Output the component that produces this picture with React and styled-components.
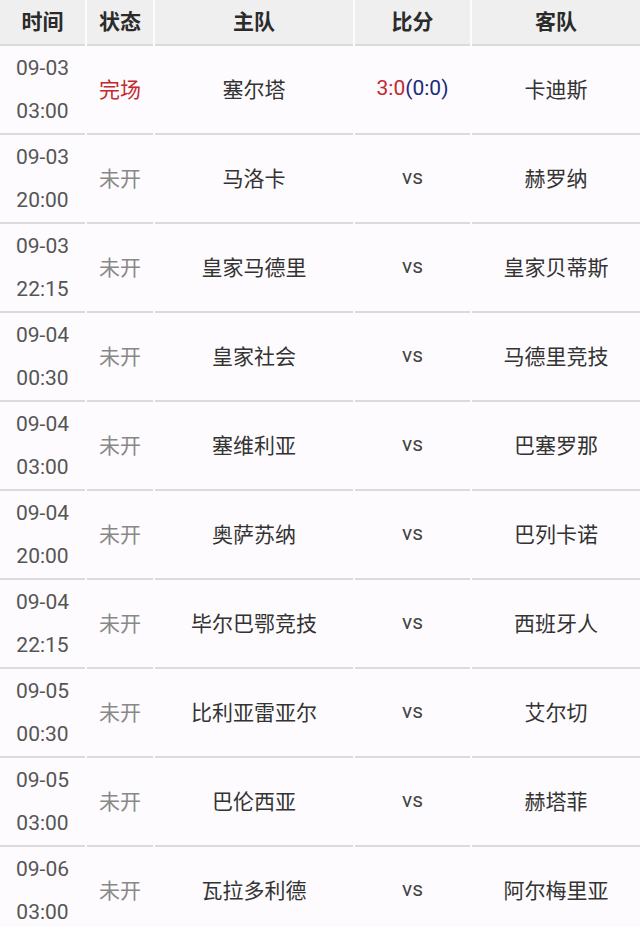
import React from 'react';
import styled, { createGlobalStyle } from 'styled-components';

const GlobalStyle = createGlobalStyle`
  body {
    margin: 0;
    background: #fdfbfd;
    font-family: Roboto, "Noto Sans CJK SC", sans-serif;
  }
`;

const MATCHES = [
  { date: '09-03', time: '03:00', done: true, home: '塞尔塔', away: '卡迪斯', score: '3:0', half: '(0:0)' },
  { date: '09-03', time: '20:00', home: '马洛卡', away: '赫罗纳' },
  { date: '09-03', time: '22:15', home: '皇家马德里', away: '皇家贝蒂斯' },
  { date: '09-04', time: '00:30', home: '皇家社会', away: '马德里竞技' },
  { date: '09-04', time: '03:00', home: '塞维利亚', away: '巴塞罗那' },
  { date: '09-04', time: '20:00', home: '奥萨苏纳', away: '巴列卡诺' },
  { date: '09-04', time: '22:15', home: '毕尔巴鄂竞技', away: '西班牙人' },
  { date: '09-05', time: '00:30', home: '比利亚雷亚尔', away: '艾尔切' },
  { date: '09-05', time: '03:00', home: '巴伦西亚', away: '赫塔菲' },
  { date: '09-06', time: '03:00', home: '瓦拉多利德', away: '阿尔梅里亚' },
];

const App = () => {
  return (
    <Table>
      <GlobalStyle />
      <Row>
        <HeadCell>时间</HeadCell>
        <HeadCell>状态</HeadCell>
        <HeadCell>主队</HeadCell>
        <HeadCell>比分</HeadCell>
        <HeadCell>客队</HeadCell>
      </Row>
      {MATCHES.map((m, i) => (
        <Row key={i}>
          <TimeCell>
            {m.date}
            <br />
            {m.time}
          </TimeCell>
          <StatusCell done={m.done}>{m.done ? '完场' : '未开'}</StatusCell>
          <TeamCell>{m.home}</TeamCell>
          <ScoreCell>
            {m.done ? (
              <>
                <Score>{m.score}</Score>
                <Half>{m.half}</Half>
              </>
            ) : (
              'vs'
            )}
          </ScoreCell>
          <TeamCell>{m.away}</TeamCell>
        </Row>
      ))}
    </Table>
  );
};

const Table = styled.div`
  width: 640px;
  overflow: hidden;
`;

const Row = styled.div`
  display: grid;
  grid-template-columns: 85px 66px 198px 115px 1fr;
  column-gap: 2px;
`;

const Cell = styled.div`
  display: flex;
  align-items: center;
  justify-content: center;
  text-align: center;
  box-sizing: border-box;
  height: 89px;
  padding-bottom: 3px;
  border-bottom: 2px solid #dcdadc;
  font-size: 21px;
  color: #333;
`;

const HeadCell = styled(Cell)`
  height: 46px;
  padding-bottom: 4px;
  background: #efefef;
  font-size: 21px;
  font-weight: 700;
  color: #2b2b2b;
`;

const TimeCell = styled(Cell)`
  padding-bottom: 0;
  line-height: 43px;
  color: #555;
`;

const StatusCell = styled(Cell)`
  color: ${p => (p.done ? '#c3282e' : '#888')};
`;

const TeamCell = styled(Cell)``;

const ScoreCell = styled(Cell)`
  color: #444;
`;

const Score = styled.span`
  color: #c3282e;
`;

const Half = styled.span`
  color: #1c2a80;
`;

export default App;
